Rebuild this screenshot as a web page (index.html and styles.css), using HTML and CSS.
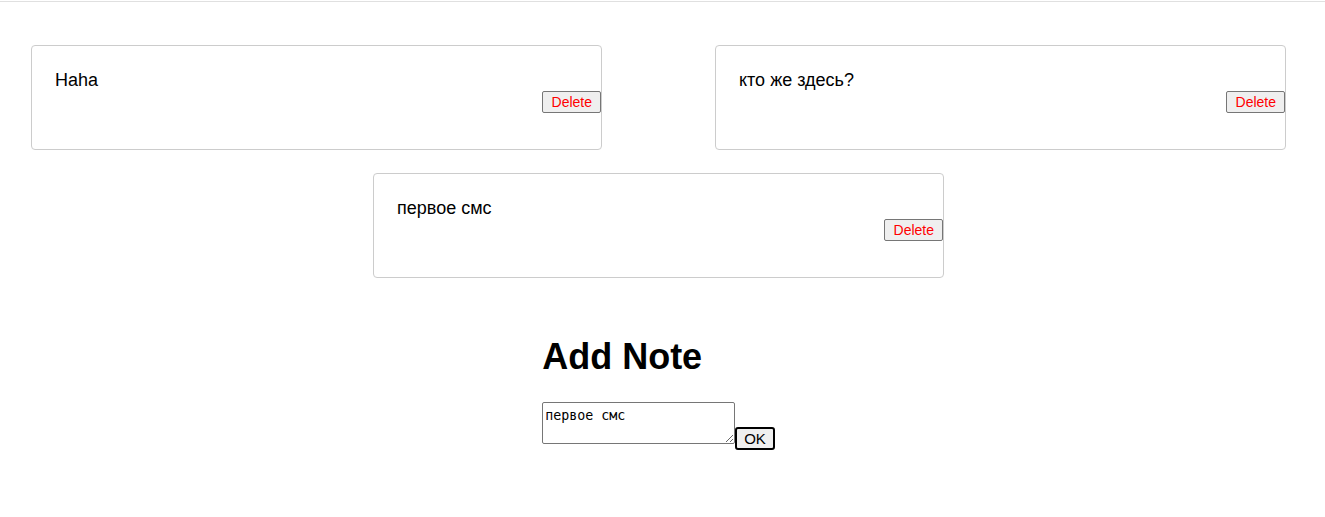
FILE: index.html
```html
<!DOCTYPE html>
<html lang="ru">
<head>
<meta charset="utf-8">
<title>Notes</title>
<link rel="stylesheet" href="styles.css">
</head>
<body>
<div class="topbar"></div>
<main class="app">
  <section class="notes">
    <div class="note">
      <p class="note-text">Haha</p>
      <button class="delete-btn">Delete</button>
    </div>
    <div class="note">
      <p class="note-text">кто же здесь?</p>
      <button class="delete-btn">Delete</button>
    </div>
    <div class="note">
      <p class="note-text">первое смс</p>
      <button class="delete-btn">Delete</button>
    </div>
  </section>
  <section class="add">
    <div class="add-inner">
      <h1 class="add-title">Add Note</h1>
      <div class="add-form"><textarea class="add-input">первое смс</textarea><button class="ok-btn">OK</button></div>
    </div>
  </section>
</main>
</body>
</html>
```

FILE: styles.css
```css
html, body {
  margin: 0;
  padding: 0;
  background: #fff;
}
body {
  font-family: "Liberation Sans", Arial, sans-serif;
  color: #000;
}
.topbar {
  height: 1px;
  margin-top: 1px;
  background: #e0e0e0;
}
.app {
  padding-right: 8px;
}
.notes {
  display: flex;
  flex-wrap: wrap;
  justify-content: center;
  column-gap: 113px;
  row-gap: 23px;
  padding-top: 43px;
}
.note {
  box-sizing: border-box;
  width: 571px;
  height: 105px;
  border: 1px solid #cccccc;
  border-radius: 4px;
  padding: 24px 0 0 23px;
  display: flex;
  flex-direction: column;
}
.note-text {
  margin: 0;
  font-size: 18px;
  line-height: 21px;
}
.delete-btn {
  align-self: flex-end;
  margin: 0;
  font-family: "Liberation Sans", Arial, sans-serif;
  font-size: 14px;
  line-height: 16px;
  color: #ff0000;
  background: #efefef;
  border: 1px solid #767676;
  border-radius: 2px;
  padding: 2px 8px 2px 9px;
}
.add {
  display: flex;
  justify-content: center;
  padding-top: 58px;
}
.add-title {
  margin: 0 0 24px;
  font-size: 36px;
  font-weight: bold;
}
.add-input {
  box-sizing: border-box;
  width: 193px;
  height: 42px;
  margin: 0;
  padding: 5px 2px 2px;
  border: 1px solid #767676;
  border-radius: 2px;
  font-family: "DejaVu Sans Mono", monospace;
  font-size: 13.33px;
}
.ok-btn {
  margin: 0;
  font-family: "Liberation Sans", Arial, sans-serif;
  font-size: 15px;
  color: #000;
  background: #efefef;
  border: 2px solid #000;
  border-radius: 3px;
  padding: 1px 7px;
}
```
